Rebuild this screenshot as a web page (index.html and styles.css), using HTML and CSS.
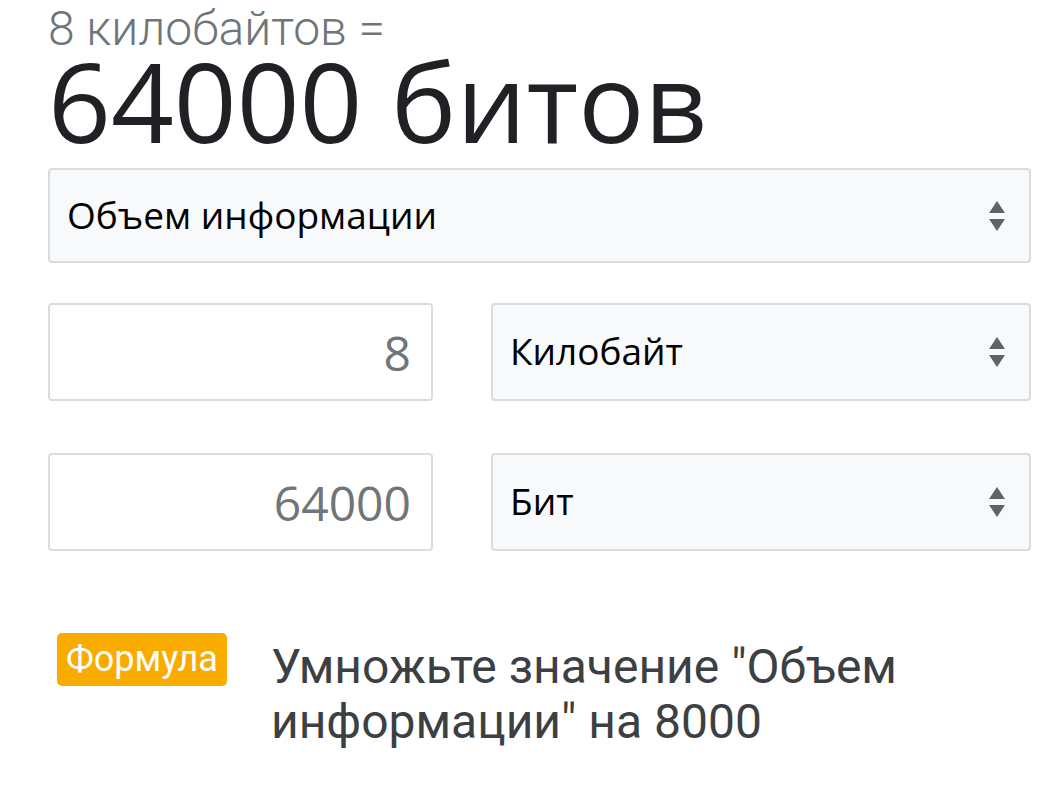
FILE: index.html
```html
<!DOCTYPE html>
<html lang="ru">

<head>
  <meta charset="utf-8">
  <link rel="stylesheet" href="styles.css">
</head>

<body>
  <div class="converter">
    <div class="result">
      <div class="result-from">8 килобайтов =</div>
      <div class="result-to">64000 битов</div>
    </div>

    <div class="select wide">
      <span>Объем информации</span>
      <svg class="arrows" viewBox="0 0 16 30" fill="currentColor">
        <path d="M8 0L16 12H0z" />
        <path d="M0 18H16L8 30z" />
      </svg>
    </div>

    <div class="pair">
      <div class="field">8</div>
      <div class="select">
        <span>Килобайт</span>
        <svg class="arrows" viewBox="0 0 16 30" fill="currentColor">
          <path d="M8 0L16 12H0z" />
          <path d="M0 18H16L8 30z" />
        </svg>
      </div>
      <div class="field">64000</div>
      <div class="select">
        <span>Бит</span>
        <svg class="arrows" viewBox="0 0 16 30" fill="currentColor">
          <path d="M8 0L16 12H0z" />
          <path d="M0 18H16L8 30z" />
        </svg>
      </div>
    </div>

    <div class="formula">
      <span class="badge">Формула</span>
      <p>Умножьте значение "Объем информации" на 8000</p>
    </div>
  </div>
</body>

</html>
```

FILE: styles.css
```css
:root {
  --text: #202124;
  --text-secondary: #70757a;
  --text-body: #3c4043;
  --field-bg: #f8f9fa;
  --border: #dadce0;
  --badge: #f9ab00;
  --radius: 4px;
}

* {
  box-sizing: border-box;
  margin: 0;
  padding: 0;
}

body {
  background: #ffffff;
  font-family: 'Open Sans', 'Noto Sans', sans-serif;
  color: var(--text);
}

.converter {
  width: 983px;
  margin-left: 48px;
  display: flex;
  flex-direction: column;
}

.result-from {
  font-family: Roboto, sans-serif;
  font-weight: 300;
  font-size: 48px;
  line-height: 48px;
  padding-top: 5px;
  color: var(--text-secondary);
}

.result-to {
  font-size: 110px;
  line-height: 94px;
  margin-bottom: 21px;
  color: var(--text);
}

.select {
  height: 98px;
  display: flex;
  align-items: center;
  justify-content: space-between;
  padding: 0 24px 0 17px;
  background: var(--field-bg);
  border: 2px solid var(--border);
  border-radius: var(--radius);
  font-size: 37px;
  color: #000000;
}

.select.wide {
  height: 95px;
}

.select span {
  margin-top: -3px;
}

.arrows {
  width: 16px;
  height: 30px;
  color: #5f6368;
}

.pair {
  margin-top: 40px;
  display: grid;
  grid-template-columns: 385px 540px;
  column-gap: 58px;
  row-gap: 52px;
}

.field {
  height: 98px;
  display: flex;
  align-items: center;
  justify-content: flex-end;
  padding-right: 20px;
  border: 2px solid var(--border);
  border-radius: var(--radius);
  font-size: 48px;
  color: var(--text-secondary);
}

.formula {
  margin-top: 82px;
  display: flex;
  align-items: flex-start;
  gap: 44px;
  padding-left: 9px;
}

.badge {
  background: var(--badge);
  color: #ffffff;
  font-family: Roboto, sans-serif;
  font-size: 36px;
  line-height: 53px;
  padding: 0 9px;
  border-radius: 5px;
}

.formula p {
  font-family: Roboto, sans-serif;
  font-size: 48px;
  line-height: 55px;
  color: var(--text-body);
  width: 680px;
  margin-top: 6px;
}
```
